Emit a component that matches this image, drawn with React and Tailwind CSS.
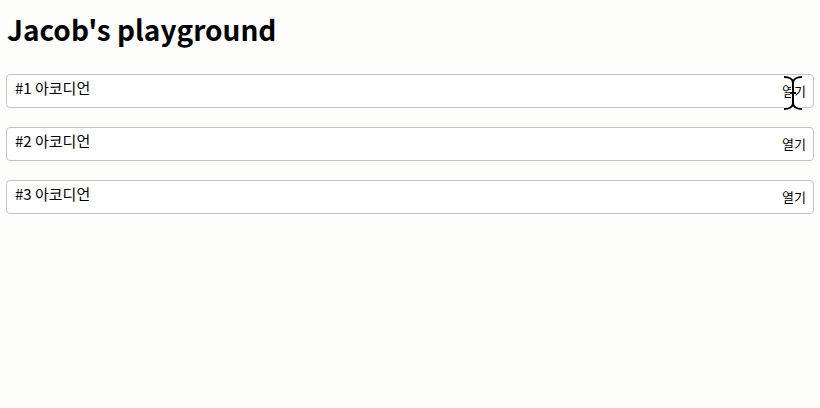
import { useState } from 'react';

const ITEMS = [
  { id: 1, title: '#1 아코디언' },
  { id: 2, title: '#2 아코디언' },
  { id: 3, title: '#3 아코디언' },
];

function IBeam() {
  return (
    <svg width="24" height="38" viewBox="0 0 24 38" className="absolute left-[781px] top-[74px] pointer-events-none">
      <path d="M3 3 C8 3 12 5 12 9 L12 29 C12 33 8 35 3 35 M21 3 C16 3 12 5 12 9 M12 29 C12 33 16 35 21 35 M9 19 L15 19" fill="none" stroke="#fff" strokeWidth="4" />
      <path d="M3 3 C8 3 12 5 12 9 L12 29 C12 33 8 35 3 35 M21 3 C16 3 12 5 12 9 M12 29 C12 33 16 35 21 35 M9 19 L15 19" fill="none" stroke="#000" strokeWidth="2" />
    </svg>
  );
}

function AccordionItem({ item }) {
  const [open, setOpen] = useState(false);
  return (
    <div className="border border-[#c4c4c4] rounded-[4px] bg-white">
      <div className="flex items-start justify-between h-[32px] pl-[8px] pr-[7px]">
        <span className="text-[15px] leading-[20px] pt-[3px] text-black">{item.title}</span>
        <button onClick={() => setOpen(!open)} className="text-[13px] leading-[16px] pt-[8px] text-black">
          {open ? '닫기' : '열기'}
        </button>
      </div>
      {open && <div className="px-[8px] pb-2 text-[13px]">내용</div>}
    </div>
  );
}

export default function App() {
  return (
    <div className="relative min-h-[408px] bg-[#fdfdfc] px-[6px] pt-[10px]" style={{ fontFamily: '"Noto Sans CJK KR", "Noto Sans", sans-serif' }}>
      <h1 className="text-[28px] font-bold leading-[38px] text-black pl-[1px]">Jacob's playground</h1>
      <div className="flex flex-col gap-[19px] mt-[26px]">
        {ITEMS.map((item) => (
          <AccordionItem key={item.id} item={item} />
        ))}
      </div>
      <IBeam />
    </div>
  );
}
